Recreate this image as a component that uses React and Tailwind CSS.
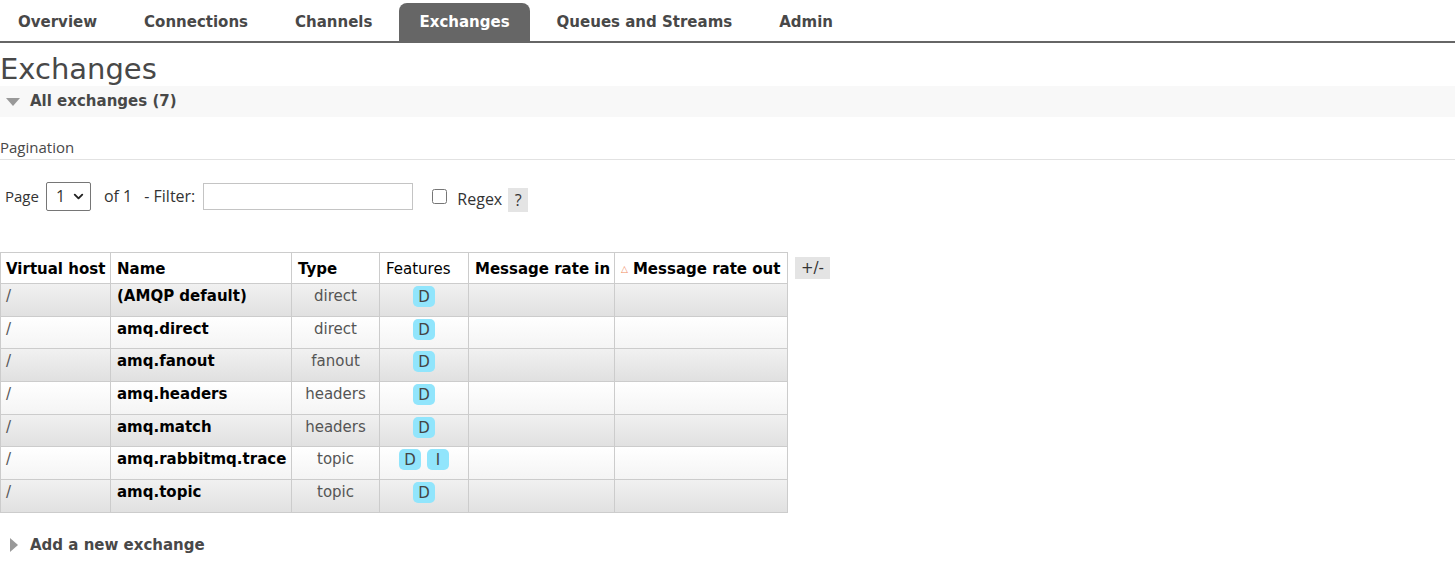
import { ChevronDown } from 'lucide-react';

const tabs = ['Overview', 'Connections', 'Channels', 'Exchanges', 'Queues and Streams', 'Admin'];

const exchanges = [
  { name: '(AMQP default)', type: 'direct', features: ['D'] },
  { name: 'amq.direct', type: 'direct', features: ['D'] },
  { name: 'amq.fanout', type: 'fanout', features: ['D'] },
  { name: 'amq.headers', type: 'headers', features: ['D'] },
  { name: 'amq.match', type: 'headers', features: ['D'] },
  { name: 'amq.rabbitmq.trace', type: 'topic', features: ['D', 'I'] },
  { name: 'amq.topic', type: 'topic', features: ['D'] },
];

function Badge({ children }) {
  return (
    <span className="inline-block h-[21px] min-w-[22px] rounded-[5px] bg-[#91e5fc] px-[5px] text-center leading-[22px] text-[#444]">
      {children}
    </span>
  );
}

export default function App() {
  return (
    <div className="min-h-screen bg-white text-[15px] text-[#484848]" style={{ fontFamily: '"DejaVu Sans", Verdana, sans-serif' }}>
      <nav className="flex items-end gap-[7px] border-b-2 border-[#666] pt-[3px]">
        {tabs.map((t, i) => (
          <div
            key={t}
            className={
              (i === 0 ? 'ml-[-2px] ' : '') +
              (t === 'Exchanges'
                ? 'h-[38px] whitespace-nowrap rounded-t-[8px] bg-[#666] px-5 font-bold leading-[38px] text-white'
                : 'h-[38px] whitespace-nowrap px-5 font-bold leading-[38px] text-[#484848]')
            }
          >
            {t}
          </div>
        ))}
      </nav>

      <h1 className="mt-[9px] text-[29px] leading-[34px] text-[#484848]">Exchanges</h1>

      <div className="flex h-[31px] items-center bg-[#f8f8f8]">
        <svg width="14" height="8" viewBox="0 0 14 8" className="ml-[6px] mr-[10px]">
          <path d="M0 0 L14 0 L7 8 Z" fill="#999" />
        </svg>
        <span className="font-bold">All exchanges (7)</span>
      </div>

      <div style={{ fontFamily: '"Open Sans", "Noto Sans", sans-serif' }}>
        <div className="mt-[21px] border-b border-[#e2e2e2] pb-[2px] text-[15px] leading-[19px] text-[#484848]">Pagination</div>

        <div className="mt-[20px] flex items-center text-[16px] text-[#333]">
          <span className="ml-[5px] text-[15px]">Page</span>
          <div className="ml-[7px] flex h-[29px] w-[45px] items-center rounded-[2px] border border-[#767676] pl-[9px]">
            <span>1</span>
            <ChevronDown size={15} strokeWidth={3} className="ml-[6px] text-[#222]" />
          </div>
          <span className="ml-[13px]">of 1</span>
          <span className="ml-[12px]">- Filter:</span>
          <div className="ml-[8px] h-[27px] w-[210px] border border-[#c4c4c4]" />
          <input type="checkbox" className="ml-[19px] h-[15px] w-[15px]" />
          <span className="ml-[10px] mt-[6px]">Regex</span>
          <span className="ml-[6px] mt-[8px] inline-block h-[24px] w-[20px] bg-[#e4e4e4] text-center leading-[24px]">?</span>
        </div>
      </div>

      <div className="mt-[40px] flex items-start">
        <table className="table-fixed border-collapse whitespace-nowrap text-[15px]" style={{ width: 787 }}>
          <colgroup>
            <col style={{ width: 110 }} />
            <col style={{ width: 181 }} />
            <col style={{ width: 88 }} />
            <col style={{ width: 89 }} />
            <col style={{ width: 146 }} />
            <col style={{ width: 173 }} />
          </colgroup>
          <thead>
            <tr className="h-[31px] bg-white text-black">
              <th className="border border-[#ccc] px-[5px] pt-[3px] text-left font-bold">Virtual host</th>
              <th className="border border-[#ccc] px-[6px] pt-[3px] text-left font-bold">Name</th>
              <th className="border border-[#ccc] px-[6px] pt-[3px] text-left font-bold">Type</th>
              <th className="border border-[#ccc] px-[6px] pt-[3px] text-left font-normal">Features</th>
              <th className="border border-[#ccc] px-[6px] pt-[3px] text-left font-bold">Message rate in</th>
              <th className="border border-[#ccc] px-[6px] pt-[3px] text-left font-bold">
                <span className="mr-[5px] align-middle text-[9px] text-[#f08a5d]">△</span>
                Message rate out
              </th>
            </tr>
          </thead>
          <tbody>
            {exchanges.map((e, i) => (
              <tr
                key={e.name}
                className={
                  i % 2 === 0
                    ? 'h-[32.7px] bg-gradient-to-b from-[#f1f1f1] to-[#e0e0e0]'
                    : 'h-[32.7px] bg-gradient-to-b from-white to-[#f4f4f4]'
                }
              >
                <td className="border border-[#ccc] px-[5px] pt-[1px] align-top leading-[22px] text-[#555]">/</td>
                <td className="border border-[#ccc] px-[6px] pt-[1px] align-top font-bold leading-[22px] text-black">{e.name}</td>
                <td className="border border-[#ccc] px-[6px] pt-[1px] text-center align-top leading-[22px] text-[#555]">{e.type}</td>
                <td className="border border-[#ccc] px-[6px] pt-[2px] text-center align-top leading-[22px]">
                  <span className="inline-flex gap-[6px]">
                    {e.features.map((f) => (
                      <Badge key={f}>{f}</Badge>
                    ))}
                  </span>
                </td>
                <td className="border border-[#ccc]" />
                <td className="border border-[#ccc]" />
              </tr>
            ))}
          </tbody>
        </table>
        <span className="ml-[7px] mt-[5px] inline-block h-[22px] w-[35px] bg-[#e4e4e4] text-center leading-[22px] text-[#333]">+/-</span>
      </div>

      <div className="mt-[21px] flex items-center">
        <svg width="8" height="14" viewBox="0 0 8 14" className="ml-[10px] mr-[12px]">
          <path d="M0 0 L8 7 L0 14 Z" fill="#999" />
        </svg>
        <span className="font-bold">Add a new exchange</span>
      </div>
    </div>
  );
}
